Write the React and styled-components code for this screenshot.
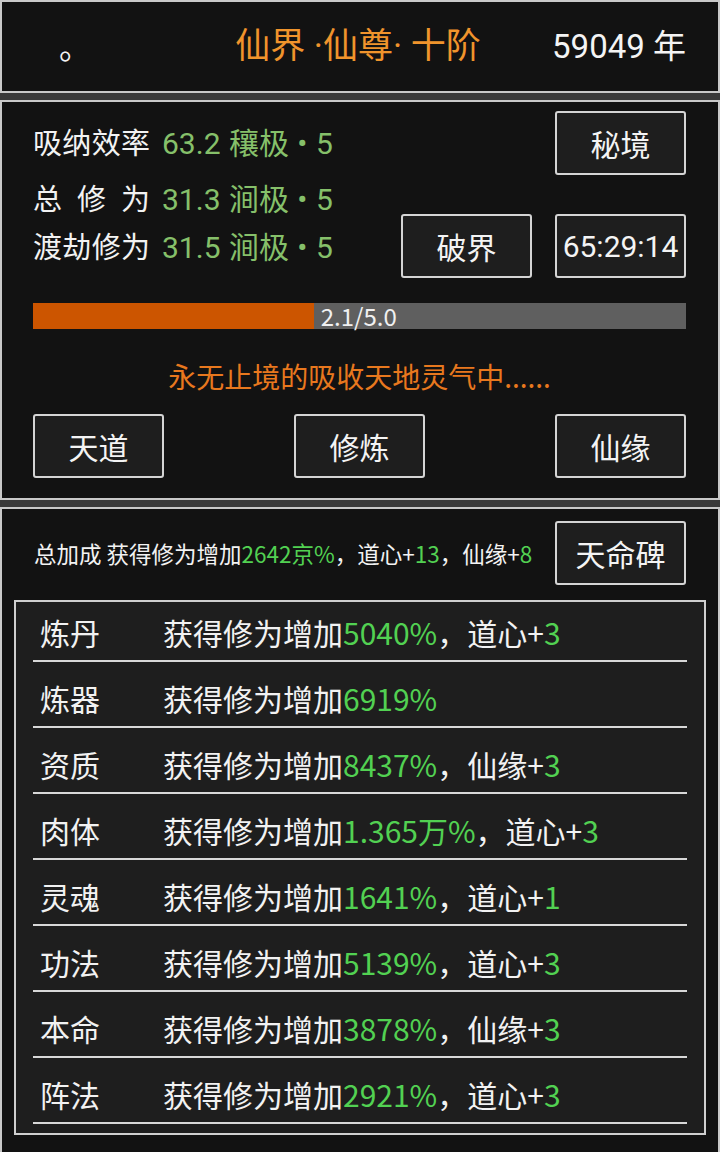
import React from "react";
import styled, { createGlobalStyle } from "styled-components";

const Global = createGlobalStyle`
  html, body { margin: 0; padding: 0; background: #3a3a3a; }
  body { width: 720px; font-family: "Roboto", "Noto Sans CJK SC", sans-serif; color: #f2f2f2; }
  * { box-sizing: border-box; }
`;

const Page = styled.div`
  display: flex;
  flex-direction: column;
  gap: 7px;
  width: 720px;
`;

const Panel = styled.section`
  background: #121212;
  border: 2px solid #c9c9c9;
`;

const TopBar = styled(Panel)`
  height: 93px;
  display: grid;
  grid-template-columns: 1fr auto 1fr;
  align-items: center;
  font-size: 33px;
`;

const Name = styled.div`
  justify-self: start;
  padding-left: 57px;
  font-family: "Noto Sans CJK SC", sans-serif;
  font-size: 32px;
  line-height: 1;
  margin-top: -4px;
`;

const Title = styled.div`
  color: #f0942c;
  font-family: "Roboto", "Noto Sans CJK SC", sans-serif;
  font-size: 35px;
  line-height: 1;
  margin-right: 4px;
`;

const Years = styled.div`
  justify-self: end;
  padding-right: 32px;
  line-height: 1;
  color: #f4f4f4;
`;

const CultPanel = styled(Panel)`
  height: 400px;
  padding: 9px 32px 0 31px;
  display: flex;
  flex-direction: column;
`;

const TopArea = styled.div`
  display: flex;
  justify-content: space-between;
`;

const Stats = styled.div`
  display: flex;
  flex-direction: column;
  padding-top: 3px;
  font-size: 29px;
`;

const StatRow = styled.div`
  display: flex;
  align-items: center;
  height: ${(p) => p.h}px;
  white-space: nowrap;
`;

const StatLabel = styled.span`
  display: inline-block;
  width: 117px;
  margin-right: 12px;
  text-align: justify;
  text-align-last: justify;
`;

const StatValue = styled.span`
  color: #86c06a;
  font-size: 30px;
  word-spacing: 1px;
`;

const ButtonGrid = styled.div`
  display: grid;
  grid-template-columns: 131px 131px;
  grid-template-rows: 64px 64px;
  column-gap: 23px;
  row-gap: 39px;
`;

const Btn = styled.button`
  grid-column: ${(p) => p.col || "auto"};
  width: 131px;
  height: 64px;
  background: #1e1e1e;
  border: 2px solid #d4d4d4;
  border-radius: 3px;
  color: #f4f4f4;
  font-family: "Roboto", "Noto Sans CJK SC", sans-serif;
  font-size: 30px;
  padding: 0;
  display: flex;
  align-items: center;
  justify-content: center;
`;

const Bar = styled.div`
  margin-top: 25px;
  height: 26px;
  background: #5f5f5f;
  display: flex;
  align-items: center;
`;

const BarFill = styled.div`
  height: 100%;
  background: #cc5500;
`;

const BarText = styled.span`
  font-family: "Noto Sans CJK SC", sans-serif;
  font-size: 24px;
  line-height: 1;
  color: #f0f0f0;
  margin-left: 7px;
`;

const Message = styled.div`
  margin-top: 29px;
  text-align: center;
  font-family: "Noto Sans CJK SC", sans-serif;
  font-size: 28px;
  line-height: 36px;
  color: #e8781e;
`;

const BottomButtons = styled.div`
  margin-top: 20px;
  display: flex;
  justify-content: space-between;
`;

const BonusPanel = styled(Panel)`
  min-height: 660px;
  padding: 12px 12px 0;
  font-family: "Noto Sans CJK SC", sans-serif;
`;

const BonusHeader = styled.div`
  display: flex;
  align-items: center;
  justify-content: space-between;
  padding: 0 20px 0 20px;
`;

const BonusText = styled.div`
  font-size: 22.5px;
  white-space: nowrap;
`;

const Green = styled.span`
  color: #52d152;
`;

const ListBox = styled.div`
  margin-top: 15px;
  background: #1e1e1e;
  border: 2px solid #cfcfcf;
  padding: 0 17px 9px;
`;

const Row = styled.div`
  display: flex;
  align-items: center;
  padding: ${(p) => (p.first ? 10 : 16)}px 0 8px 7px;
  border-bottom: 2px solid #d8d8d8;
  box-sizing: content-box;
  height: 40px;
  font-size: 30px;
  white-space: nowrap;
`;

const RowLabel = styled.span`
  width: 123px;
  flex: none;
`;

const rows = [
  ["炼丹", "5040%", "道心", "3"],
  ["炼器", "6919%", null, null],
  ["资质", "8437%", "仙缘", "3"],
  ["肉体", "1.365万%", "道心", "3"],
  ["灵魂", "1641%", "道心", "1"],
  ["功法", "5139%", "道心", "3"],
  ["本命", "3878%", "仙缘", "3"],
  ["阵法", "2921%", "道心", "3"],
];

export default function App() {
  return (
    <>
      <Global />
      <Page>
        <TopBar>
          <Name>。</Name>
          <Title>仙界 ·仙尊· 十阶</Title>
          <Years>59049 年</Years>
        </TopBar>

        <CultPanel>
          <TopArea>
            <Stats>
              <StatRow h={54}>
                <StatLabel>吸纳效率</StatLabel>
                <StatValue>63.2 穰极 • 5</StatValue>
              </StatRow>
              <StatRow h={58}>
                <StatLabel>总修为</StatLabel>
                <StatValue>31.3 涧极 • 5</StatValue>
              </StatRow>
              <StatRow h={38}>
                <StatLabel>渡劫修为</StatLabel>
                <StatValue>31.5 涧极 • 5</StatValue>
              </StatRow>
            </Stats>
            <ButtonGrid>
              <Btn col="2">秘境</Btn>
              <Btn>破界</Btn>
              <Btn>65:29:14</Btn>
            </ButtonGrid>
          </TopArea>
          <Bar>
            <BarFill style={{ width: `${(2.1 / 5) * 100 + 1}%` }} />
            <BarText>2.1/5.0</BarText>
          </Bar>
          <Message>永无止境的吸收天地灵气中......</Message>
          <BottomButtons>
            <Btn>天道</Btn>
            <Btn>修炼</Btn>
            <Btn>仙缘</Btn>
          </BottomButtons>
        </CultPanel>

        <BonusPanel>
          <BonusHeader>
            <BonusText>
              总加成 获得修为增加<Green>2642京%</Green>，道心+<Green>13</Green>，仙缘+<Green>8</Green>
            </BonusText>
            <Btn>天命碑</Btn>
          </BonusHeader>
          <ListBox>
            {rows.map(([label, pct, kind, n], i) => (
              <Row key={label} first={i === 0}>
                <RowLabel>{label}</RowLabel>
                <span>
                  获得修为增加<Green>{pct}</Green>
                  {kind && (
                    <>
                      ，{kind}+<Green>{n}</Green>
                    </>
                  )}
                </span>
              </Row>
            ))}
          </ListBox>
        </BonusPanel>
      </Page>
    </>
  );
}
